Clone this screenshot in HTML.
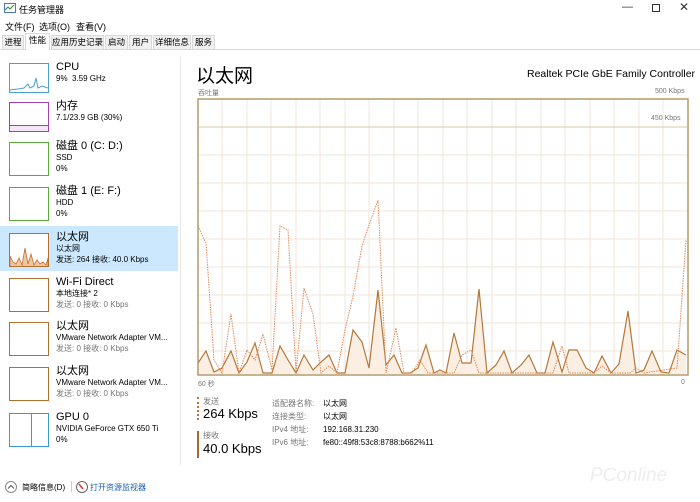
<!DOCTYPE html><html><head><meta charset="utf-8"><style>
*{margin:0;padding:0;box-sizing:border-box}
body{width:700px;height:502px;background:#fff;font-family:"Liberation Sans","Noto Sans CJK SC",sans-serif;color:#000;position:relative;overflow:hidden;font-size:9px}
.a{position:absolute;white-space:nowrap}
.tab{position:absolute;top:35px;height:14px;font-size:8.5px;line-height:13px;border:1px solid #d9d9d9;border-bottom:none;background:#f0f0f0;text-align:center;overflow:hidden}
.item{position:absolute;left:0;width:178px;height:45px}
.th{position:absolute;left:9px;top:2px;width:40px;height:30px;border:1px solid}
.nm{position:absolute;left:56px;top:0px;font-size:11px;line-height:13px}
.s1{position:absolute;left:56px;top:13px;font-size:8px;line-height:10px}
.s2{position:absolute;left:56px;top:24px;font-size:8px;line-height:10px}
.g{color:#777}
</style></head><body>
<svg class="a" style="left:4px;top:3px" width="12" height="11"><rect x="0.5" y="0.5" width="11" height="9" fill="#fff" stroke="#4a7ab0"/><polyline points="1,7 4,4 6,6 10,2" fill="none" stroke="#3a8a3a"/></svg>
<div class="a" style="left:19px;top:3px;font-size:9px">任务管理器</div>
<div class="a" style="left:622px;top:1px;font-size:11px;color:#333">—</div>
<div class="a" style="left:652px;top:4px;width:8px;height:8px;border:1px solid #333"></div>
<div class="a" style="left:679px;top:0px;font-size:12px;color:#333">✕</div>
<div class="a" style="left:5px;top:20px;font-size:9px">文件(F)</div>
<div class="a" style="left:39px;top:20px;font-size:9px">选项(O)</div>
<div class="a" style="left:76px;top:20px;font-size:9px">查看(V)</div>
<div class="a" style="left:0;top:49px;width:700px;height:1px;background:#d9d9d9"></div>
<div class="tab" style="left:2px;width:22px">进程</div>
<div class="tab" style="left:25px;width:25px;top:33px;height:17px;background:#fff">性能</div>
<div class="tab" style="left:51px;width:53px">应用历史记录</div>
<div class="tab" style="left:105px;width:23px">启动</div>
<div class="tab" style="left:129px;width:23px">用户</div>
<div class="tab" style="left:153px;width:38px">详细信息</div>
<div class="tab" style="left:192px;width:23px">服务</div>
<div class="a" style="left:180px;top:57px;width:1px;height:408px;background:#e6e6e6"></div>

<div class="item" style="top:61px"><div class="th" style="border-color:#4aa0d0"><svg width="38" height="28"><polyline points="0,26 8,25 14,24 18,20 20,24 24,22 26,14 28,24 32,22 38,24" fill="none" stroke="#4aa0d0"/></svg></div><div class="nm">CPU</div><div class="s1">9% &nbsp;3.59 GHz</div></div>
<div class="item" style="top:100px"><div class="th" style="border-color:#a040b0"><div style="position:absolute;left:0;bottom:0;width:38px;height:6px;background:#f4e6f6;border-top:1px solid #a040b0"></div></div><div class="nm">内存</div><div class="s1">7.1/23.9 GB (30%)</div></div>
<div class="item" style="top:140px"><div class="th" style="border-color:#5aaa3a;height:34px"></div><div class="nm">磁盘 0 (C: D:)</div><div class="s1">SSD</div><div class="s2">0%</div></div>
<div class="item" style="top:185px"><div class="th" style="border-color:#5aaa3a;height:34px"></div><div class="nm">磁盘 1 (E: F:)</div><div class="s1">HDD</div><div class="s2">0%</div></div>
<div class="a" style="left:0;top:226px;width:178px;height:45px;background:#cce8ff"></div>
<div class="item" style="top:231px"><div class="th" style="border-color:#b07030;background:#fff;height:34px"><svg width="38" height="32"><polyline points="0,32 0,22 3,28 6,30 9,24 12,31 15,14 18,30 21,20 24,31 27,26 30,30 33,28 36,31 38,24 38,32" fill="#f0c8a0" stroke="#c86a30" stroke-width="0.8"/></svg></div><div class="nm">以太网</div><div class="s1">以太网</div><div class="s2">发送: 264 接收: 40.0 Kbps</div></div>
<div class="item" style="top:276px"><div class="th" style="border-color:#b07030;height:34px"></div><div class="nm">Wi-Fi Direct</div><div class="s1">本地连接* 2</div><div class="s2 g">发送: 0 接收: 0 Kbps</div></div>
<div class="item" style="top:320px"><div class="th" style="border-color:#b07030;height:34px"></div><div class="nm">以太网</div><div class="s1">VMware Network Adapter VM...</div><div class="s2 g">发送: 0 接收: 0 Kbps</div></div>
<div class="item" style="top:365px"><div class="th" style="border-color:#b07030;height:34px"></div><div class="nm">以太网</div><div class="s1">VMware Network Adapter VM...</div><div class="s2 g">发送: 0 接收: 0 Kbps</div></div>
<div class="item" style="top:411px"><div class="th" style="border-color:#3a9ad0;height:34px"><div style="position:absolute;left:21px;top:0;width:1px;height:32px;background:#3a9ad0"></div></div><div class="nm">GPU 0</div><div class="s1">NVIDIA GeForce GTX 650 Ti</div><div class="s2">0%</div></div>

<div class="a" style="left:196px;top:61px;font-size:19px">以太网</div>
<div class="a" style="left:527px;top:68px;font-size:10.5px;width:160px;text-align:right">Realtek PCIe GbE Family Controller</div>
<div class="a g" style="left:198px;top:88px;font-size:7px">吞吐量</div>
<div class="a g" style="left:655px;top:88px;font-size:7px">500 Kbps</div>
<svg class="a" style="left:197px;top:98px" width="492" height="278">
<g stroke="#f0e6da" stroke-width="1">
<line x1="25" y1="0" x2="25" y2="278"/><line x1="50" y1="0" x2="50" y2="278"/><line x1="74" y1="0" x2="74" y2="278"/><line x1="99" y1="0" x2="99" y2="278"/><line x1="123" y1="0" x2="123" y2="278"/><line x1="148" y1="0" x2="148" y2="278"/><line x1="172" y1="0" x2="172" y2="278"/><line x1="197" y1="0" x2="197" y2="278"/><line x1="221" y1="0" x2="221" y2="278"/><line x1="246" y1="0" x2="246" y2="278"/><line x1="270" y1="0" x2="270" y2="278"/><line x1="295" y1="0" x2="295" y2="278"/><line x1="319" y1="0" x2="319" y2="278"/><line x1="344" y1="0" x2="344" y2="278"/><line x1="368" y1="0" x2="368" y2="278"/><line x1="393" y1="0" x2="393" y2="278"/><line x1="417" y1="0" x2="417" y2="278"/><line x1="442" y1="0" x2="442" y2="278"/><line x1="466" y1="0" x2="466" y2="278"/>
<line x1="0" y1="29" x2="492" y2="29"/><line x1="0" y1="57" x2="492" y2="57"/><line x1="0" y1="85" x2="492" y2="85"/><line x1="0" y1="113" x2="492" y2="113"/><line x1="0" y1="141" x2="492" y2="141"/><line x1="0" y1="169" x2="492" y2="169"/><line x1="0" y1="197" x2="492" y2="197"/><line x1="0" y1="225" x2="492" y2="225"/><line x1="0" y1="253" x2="492" y2="253"/>
</g>
<g transform="translate(-197,-98)">
<polygon fill="#fbeee2" points="198,374 198,363 206,351 214,372 222,368 231,351 239,373 247,362 255,343 263,373 272,373 280,346 288,360 296,373 304,355 313,370 321,362 329,355 337,373 345,373 353,330 362,342 369,368 378,290 386,365 394,355 402,373 410,373 418,368 426,345 434,373 440,370 446,373 454,333 462,363 471,363 479,289 487,373 496,365 504,351 512,373 521,365 529,355 537,373 545,373 553,342 562,372 569,350 577,350 586,368 594,373 602,356 611,373 619,364 628,311 636,373 644,370 652,351 661,372 669,373 677,350 686,355 686,374"/>
<polyline fill="none" stroke="#b5783a" stroke-width="1.2" points="198,363 206,351 214,372 222,368 231,351 239,373 247,362 255,343 263,373 272,373 280,346 288,360 296,373 304,355 313,370 321,362 329,355 337,373 345,373 353,330 362,342 369,368 378,290 386,365 394,355 402,373 410,373 418,368 426,345 434,373 440,370 446,373 454,333 462,363 471,363 479,289 487,373 496,365 504,351 512,373 521,365 529,355 537,373 545,373 553,342 562,372 569,350 577,350 586,368 594,373 602,356 611,373 619,364 628,311 636,373 644,370 652,351 661,372 669,373 677,350 686,355"/>
<polyline fill="none" stroke="#e08a5a" stroke-width="1" stroke-dasharray="1.5,1" points="198,226 206,243 214,360 222,373 231,314 239,373 247,350 255,360 263,334 272,370 280,226 288,230 296,373 304,288 313,314 321,373 329,366 337,373 345,330 353,296 362,246 369,225 378,200 386,373 396,328 404,373 412,373 420,360 428,373 440,373 446,373 454,373 462,355 471,350 479,373 487,373 545,373 553,373 562,346 569,373 594,373 602,366 611,373 630,373 636,368 644,373 677,368 686,240"/>
</g>
<rect x="1" y="1" width="490" height="276" fill="none" stroke="#b59a6a" stroke-width="1.5"/>
<line x1="1" y1="29" x2="491" y2="29" stroke="#cfbd9a" stroke-width="0.8"/>
</svg>
<div class="a g" style="left:651px;top:115px;font-size:7px">450 Kbps</div>
<div class="a g" style="left:198px;top:379px;font-size:7px">60 秒</div>
<div class="a g" style="left:681px;top:379px;font-size:7px">0</div>

<div class="a" style="left:197px;top:397px;width:0;height:23px;border-left:2px dotted #c8703a"></div>
<div class="a g" style="left:203px;top:396px;font-size:8px">发送</div>
<div class="a" style="left:203px;top:406px;font-size:13px">264 Kbps</div>
<div class="a" style="left:197px;top:431px;width:2px;height:27px;background:#a06a30"></div>
<div class="a g" style="left:203px;top:430px;font-size:8px">接收</div>
<div class="a" style="left:203px;top:441px;font-size:13px">40.0 Kbps</div>
<div class="a g" style="left:272px;top:397px;font-size:8px;line-height:13px">适配器名称:<br>连接类型:<br>IPv4 地址:<br>IPv6 地址:</div>
<div class="a" style="left:323px;top:397px;font-size:8px;line-height:13px">以太网<br>以太网<br>192.168.31.230<br>fe80::49f8:53c8:8788:b662%11</div>
<div class="a" style="left:590px;top:465px;font-size:19px;color:#eee;font-style:italic">PConline</div>

<svg class="a" style="left:5px;top:481px" width="12" height="12"><circle cx="6" cy="6" r="5.5" fill="none" stroke="#888"/><polyline points="3,7.5 6,4.5 9,7.5" fill="none" stroke="#555"/></svg>
<div class="a" style="left:22px;top:482px;font-size:8px">简略信息(D)</div>
<div class="a" style="left:71px;top:481px;width:1px;height:11px;background:#ccc"></div>
<svg class="a" style="left:76px;top:481px" width="12" height="12"><circle cx="6" cy="6" r="5.5" fill="#fff" stroke="#666"/><line x1="3" y1="3" x2="7" y2="8" stroke="#c33" stroke-width="1.5"/></svg>
<div class="a" style="left:90px;top:482px;font-size:8px;color:#1a5fb4">打开资源监视器</div>
</body></html>
